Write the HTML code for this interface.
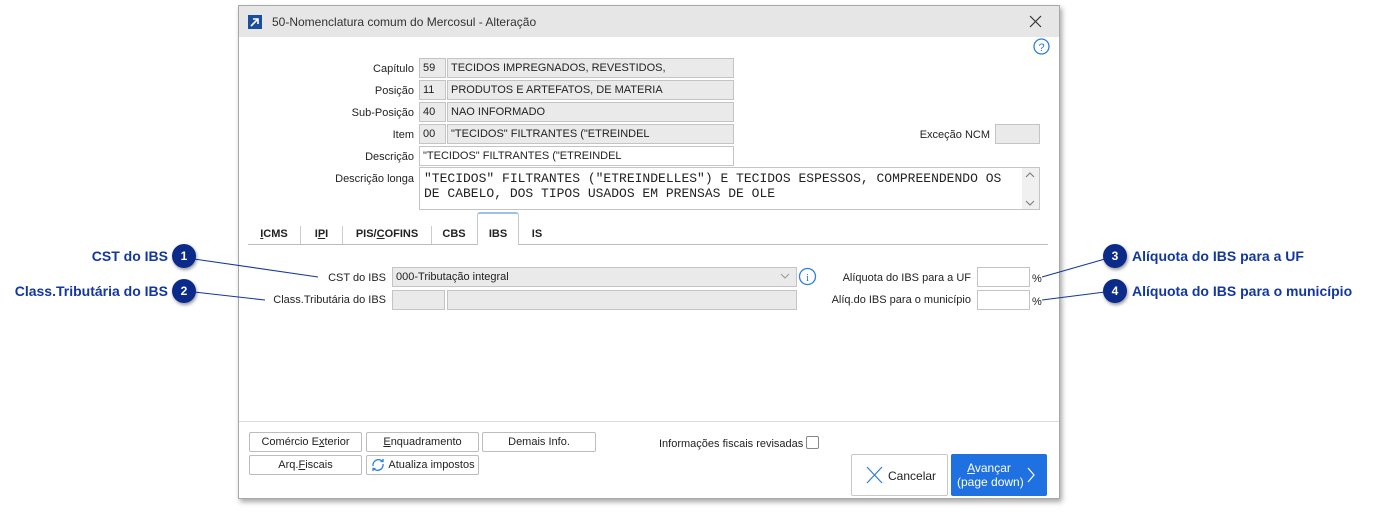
<!DOCTYPE html><html><head><meta charset="utf-8"><style>
*{box-sizing:border-box;margin:0;padding:0}
body{width:1377px;height:515px;background:#fff;position:relative;overflow:hidden;font-family:"Liberation Sans",sans-serif;font-size:11px;color:#222}
.a{position:absolute}
.win{left:238px;top:5px;width:822px;height:494px;border:1px solid #a8a8a8;box-shadow:2px 3px 5px rgba(0,0,0,.35);background:#fff}
.title{left:0;top:0;width:820px;height:31px;background:#e6e6e6}
.lbl{text-align:right;white-space:nowrap}
.box{background:#eaeaea;border:1px solid #c4c4c4;padding:3px 3px;white-space:nowrap;overflow:hidden;height:20px;line-height:13px}
.wbox{background:#fff;border:1px solid #c4c4c4;padding:3px 3px;height:20px;line-height:13px}
.tab{top:223px;height:22px;font-weight:bold;font-size:11px;text-align:center;line-height:22px}
.sep{top:226px;width:1px;height:18px;background:#ccc}
.btn{background:#fff;border:1px solid #bdbdbd;border-radius:2px;text-align:center;line-height:18px;height:20px}
.cl{color:#1337a0;font-weight:bold;font-size:14px;white-space:nowrap}
.circ{width:24px;height:24px;border-radius:50%;background:#0b2a8a;color:#fff;font-weight:bold;font-size:12px;text-align:center;line-height:24px;box-shadow:1px 2px 3px rgba(0,0,0,.4)}
u{text-decoration:underline}
</style></head><body>
<div class="a win">
 <div class="a title"></div>
 <div class="a" style="left:9px;top:9px;width:14px;height:14px;background:#1a4fa0"><svg width="14" height="14"><path d="M3 11 L10 4 M5 4 H10 V9" stroke="#fff" stroke-width="1.6" fill="none"/></svg></div>
 <div class="a" style="left:33px;top:9px;font-size:12px;color:#333">50-Nomenclatura comum do Mercosul - Alteração</div>
 <svg class="a" style="left:790px;top:9px" width="13" height="13"><path d="M1 1 L12 12 M12 1 L1 12" stroke="#333" stroke-width="1.2"/></svg>
 <svg class="a" style="left:794px;top:32px" width="17" height="17"><circle cx="8.5" cy="8.5" r="7.5" stroke="#2b7de0" stroke-width="1.3" fill="none"/><text x="8.5" y="13" font-size="11" text-anchor="middle" fill="#2b7de0" font-family="Liberation Sans">?</text></svg>
</div>
<div class="a lbl" style="left:300px;top:63px;width:114px">Capítulo</div>
<div class="a box" style="left:419px;top:58px;width:27px">59</div><div class="a box" style="left:447px;top:58px;width:287px">TECIDOS IMPREGNADOS, REVESTIDOS,</div>
<div class="a lbl" style="left:300px;top:85px;width:114px">Posição</div>
<div class="a box" style="left:419px;top:80px;width:27px">11</div><div class="a box" style="left:447px;top:80px;width:287px">PRODUTOS E ARTEFATOS, DE MATERIA</div>
<div class="a lbl" style="left:300px;top:107px;width:114px">Sub-Posição</div>
<div class="a box" style="left:419px;top:102px;width:27px">40</div><div class="a box" style="left:447px;top:102px;width:287px">NAO INFORMADO</div>
<div class="a lbl" style="left:300px;top:129px;width:114px">Item</div>
<div class="a box" style="left:419px;top:124px;width:27px">00</div><div class="a box" style="left:447px;top:124px;width:287px">"TECIDOS" FILTRANTES ("ETREINDEL</div>
<div class="a lbl" style="left:870px;top:129px;width:120px">Exceção NCM</div>
<div class="a box" style="left:995px;top:124px;width:45px"></div>
<div class="a lbl" style="left:300px;top:151px;width:114px">Descrição</div>
<div class="a wbox" style="left:419px;top:146px;width:315px">"TECIDOS" FILTRANTES ("ETREINDEL</div>
<div class="a lbl" style="left:300px;top:173px;width:114px">Descrição longa</div>
<div class="a wbox" style="left:419px;top:167px;width:621px;height:43px;font-family:'Liberation Mono',monospace;font-size:13px;line-height:15px;padding:3px 4px 0 4px;white-space:pre">"TECIDOS" FILTRANTES ("ETREINDELLES") E TECIDOS ESPESSOS, COMPREENDENDO OS
DE CABELO, DOS TIPOS USADOS EM PRENSAS DE OLE</div>
<div class="a" style="left:1022px;top:168px;width:17px;height:41px;background:#f0f0f0"></div>
<svg class="a" style="left:1025px;top:172px" width="10" height="35"><path d="M1 5 L5 1 L9 5 M1 29 L5 33 L9 29" stroke="#777" fill="none"/></svg>
<div class="a" style="left:248px;top:244px;width:800px;height:1px;background:#bbb"></div>
<div class="a" style="left:477px;top:212px;width:42px;height:33px;background:#fff;border:1px solid #c8c8c8;border-bottom:none;border-top:2px solid #9ec0e8;border-radius:3px 3px 0 0"></div>
<div class="a tab" style="left:249px;width:50px"><u>I</u>CMS</div><div class="a sep" style="left:300px"></div>
<div class="a tab" style="left:301px;width:41px">I<u>P</u>I</div><div class="a sep" style="left:342px"></div>
<div class="a tab" style="left:343px;width:88px">PIS/<u>C</u>OFINS</div><div class="a sep" style="left:431px"></div>
<div class="a tab" style="left:432px;width:44px">CBS</div>
<div class="a tab" style="left:477px;width:42px">IBS</div>
<div class="a tab" style="left:519px;width:36px">IS</div>
<div class="a lbl" style="left:250px;top:272px;width:136px">CST do IBS</div>
<div class="a box" style="left:392px;top:267px;width:405px">000-Tributação integral</div>
<svg class="a" style="left:780px;top:273px" width="10" height="7"><path d="M1 1 L5 5 L9 1" stroke="#999" fill="none"/></svg>
<svg class="a" style="left:798px;top:267px" width="19" height="19"><circle cx="9.5" cy="9.5" r="8" stroke="#2b7de0" stroke-width="1.3" fill="none"/><text x="9.5" y="14" font-size="11" text-anchor="middle" fill="#2b7de0" font-family="Liberation Serif">i</text></svg>
<div class="a lbl" style="left:250px;top:294px;width:136px">Class.Tributária do IBS</div>
<div class="a box" style="left:392px;top:290px;width:53px"></div><div class="a box" style="left:447px;top:290px;width:350px"></div>
<div class="a lbl" style="left:820px;top:272px;width:151px">Alíquota do IBS para a UF</div>
<div class="a wbox" style="left:977px;top:267px;width:53px"></div><div class="a" style="left:1032px;top:273px">%</div>
<div class="a lbl" style="left:820px;top:294px;width:151px">Alíq.do IBS para o município</div>
<div class="a wbox" style="left:977px;top:290px;width:53px"></div><div class="a" style="left:1032px;top:296px">%</div>
<div class="a" style="left:239px;top:421px;width:820px;height:1px;background:#ddd"></div>
<div class="a btn" style="left:249px;top:432px;width:113px">Comércio E<u>x</u>terior</div>
<div class="a btn" style="left:366px;top:432px;width:113px"><u>E</u>nquadramento</div>
<div class="a btn" style="left:482px;top:432px;width:114px">Demais Info.</div>
<div class="a btn" style="left:249px;top:455px;width:113px">Arq.<u>F</u>iscais</div>
<div class="a btn" style="left:366px;top:455px;width:113px;padding-left:18px">Atualiza impostos</div>
<svg class="a" style="left:370px;top:457px" width="16" height="16"><path d="M3 9 A5.5 5.5 0 0 1 12.5 4.5 M13 7 A5.5 5.5 0 0 1 3.5 11.5" stroke="#2b7de0" stroke-width="1.3" fill="none"/><path d="M10.5 4.5 H13 V2 M5.5 11.5 H3 V14" stroke="#2b7de0" stroke-width="1.3" fill="none"/></svg>
<div class="a" style="left:659px;top:438px">Informações fiscais revisadas</div>
<div class="a" style="left:806px;top:436px;width:13px;height:13px;border:1px solid #888;border-radius:2px"></div>
<div class="a" style="left:851px;top:454px;width:97px;height:42px;border:1px solid #c8c8c8;border-radius:2px;background:#fff"></div>
<svg class="a" style="left:866px;top:466px" width="17" height="18"><path d="M1 1 L16 17 M16 1 L1 17" stroke="#2b7de0" stroke-width="1.2"/></svg>
<div class="a" style="left:888px;top:469px;font-size:12px">Cancelar</div>
<div class="a" style="left:951px;top:454px;width:96px;height:42px;background:#1f70e0;border-radius:2px;color:#fff;font-size:12px;line-height:14px;padding:7px 0 0 6px"><div style="text-align:center;width:64px"><u>A</u>vançar</div><div>(page down)</div></div>
<svg class="a" style="left:1027px;top:467px" width="9" height="16"><path d="M1 1 L7 8 L1 15" stroke="#fff" stroke-width="1.2" fill="none"/></svg>
<svg class="a" style="left:0;top:0" width="1377" height="515"><g stroke="#1337a0" stroke-width="1.1"><line x1="194" y1="259" x2="318" y2="277"/><line x1="194" y1="292" x2="265" y2="300"/><line x1="1105" y1="259" x2="1042" y2="277"/><line x1="1105" y1="292" x2="1042" y2="300"/></g></svg>
<div class="a circ" style="left:172px;top:244px">1</div>
<div class="a circ" style="left:172px;top:279px">2</div>
<div class="a circ" style="left:1103px;top:244px">3</div>
<div class="a circ" style="left:1103px;top:279px">4</div>
<div class="a cl" style="left:0;top:248px;width:168px;text-align:right">CST do IBS</div>
<div class="a cl" style="left:0;top:283px;width:168px;text-align:right">Class.Tributária do IBS</div>
<div class="a cl" style="left:1132px;top:248px">Alíquota do IBS para a UF</div>
<div class="a cl" style="left:1132px;top:283px">Alíquota do IBS para o município</div>
</body></html>
